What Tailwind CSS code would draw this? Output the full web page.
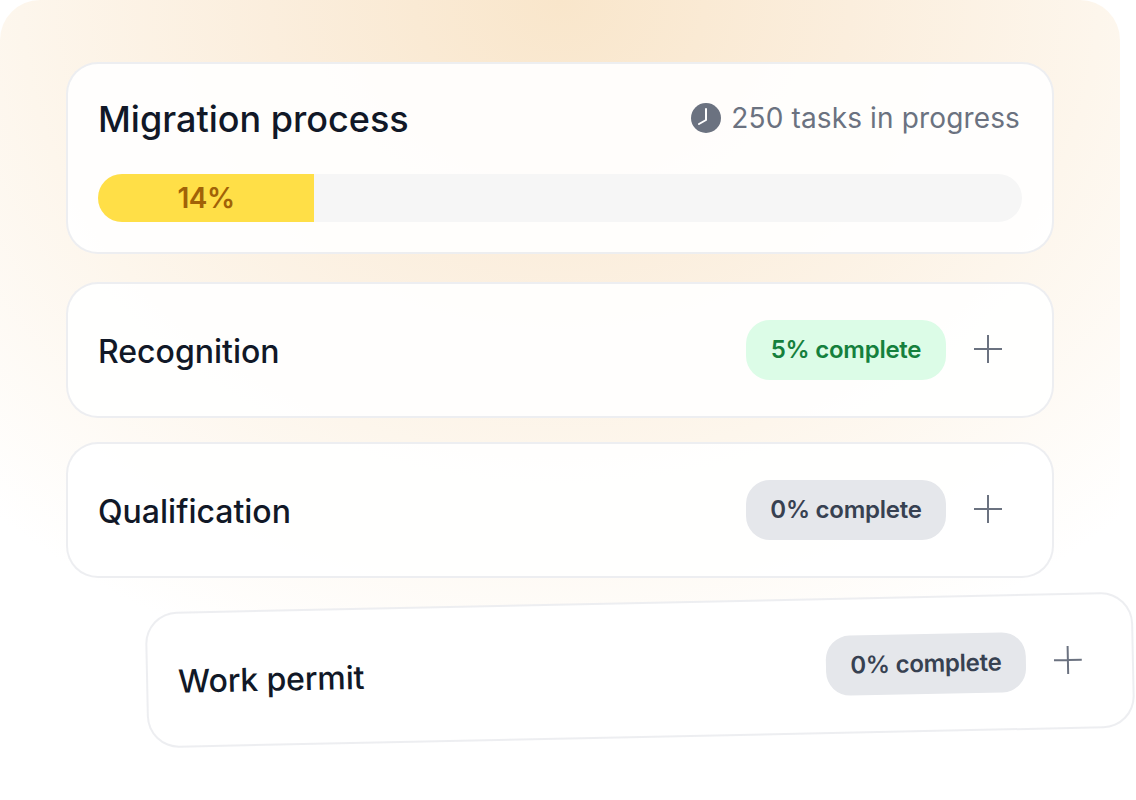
<!DOCTYPE html>
<html lang="en">
<head>
    <meta charset="UTF-8">
    <title>Migration process</title>
    <script src="https://cdn.jsdelivr.net/npm/@tailwindcss/browser@4"></script>
</head>
<body class="bg-white font-['Inter',sans-serif] overflow-hidden">
    <div class="w-[1120px] h-[800px] rounded-t-[40px] pt-[62px] pl-[66px] bg-[radial-gradient(ellipse_74%_88%_at_50%_0%,#f9e6cb_0%,#fbeedd_35%,#fdf6ec_65%,#ffffff_100%)]">
        <div class="w-[988px] h-[192px] mb-[28px] px-[30px] pt-[30px] rounded-[32px] border-2 border-gray-200/70 bg-white/90">
            <div class="flex items-start justify-between h-[52px]">
                <h1 class="text-[36px] leading-[50px] font-medium text-[#111827]">Migration process</h1>
                <div class="flex items-center gap-[10px] h-[48px] pr-[2px] text-[28px] tracking-[0.14px] text-[#6b7280]">
                    <svg class="w-[30px] h-[30px]" viewBox="0 0 30 30" fill="none">
                        <circle cx="15" cy="15" r="15" fill="#6b7280"/>
                        <path d="M15 6v11l-7 4" stroke="#fff" stroke-width="2" stroke-linecap="round" stroke-linejoin="round"/>
                    </svg>
                    <span>250 tasks in progress</span>
                </div>
            </div>
            <div class="mt-[28px] h-[48px] rounded-full bg-[#f6f6f6] overflow-hidden">
                <div class="w-[216px] h-full bg-[#ffdf47] flex items-center justify-center text-[28px] font-semibold tracking-[-0.5px] text-[#a16207]">14%</div>
            </div>
        </div>

        <div class="w-[988px] h-[136px] mb-[24px] pl-[30px] pr-[50px] flex items-center justify-between rounded-[32px] border-2 border-gray-200/70 bg-white/90">
            <span class="pt-[3px] text-[32px] font-medium text-[#111827]">Recognition</span>
            <div class="flex items-center gap-[28px]">
                <span class="w-[200px] h-[60px] flex items-center justify-center rounded-3xl bg-[#dcfce7] text-[24px] font-semibold tracking-[-0.25px] text-[#15803d]">5% complete</span>
                <svg class="w-[28px] h-[28px] mb-[2px]" viewBox="0 0 28 28" fill="none" stroke="#6b7280" stroke-width="2"><path d="M0 14h28M14 0v28"/></svg>
            </div>
        </div>

        <div class="w-[988px] h-[136px] mb-[24px] pl-[30px] pr-[50px] flex items-center justify-between rounded-[32px] border-2 border-gray-200/70 bg-white/90">
            <span class="pt-[3px] text-[32px] font-medium text-[#111827]">Qualification</span>
            <div class="flex items-center gap-[28px]">
                <span class="w-[200px] h-[60px] flex items-center justify-center rounded-3xl bg-[#e5e7eb] text-[24px] font-semibold tracking-[-0.25px] text-[#374151]">0% complete</span>
                <svg class="w-[28px] h-[28px] mb-[2px]" viewBox="0 0 28 28" fill="none" stroke="#6b7280" stroke-width="2"><path d="M0 14h28M14 0v28"/></svg>
            </div>
        </div>

        <div class="w-[988px] h-[136px] ml-[80px] rotate-[-1.2deg] pl-[30px] pr-[50px] flex items-center justify-between rounded-[32px] border-2 border-gray-200/70 bg-white/90">
            <span class="pt-[3px] text-[32px] font-medium tracking-[-0.15px] text-[#111827]">Work permit</span>
            <div class="flex items-center gap-[28px]">
                <span class="w-[200px] h-[60px] flex items-center justify-center rounded-3xl bg-[#e5e7eb] text-[24px] font-semibold tracking-[-0.25px] text-[#374151]">0% complete</span>
                <svg class="w-[28px] h-[28px] mb-[2px]" viewBox="0 0 28 28" fill="none" stroke="#6b7280" stroke-width="2"><path d="M0 14h28M14 0v28"/></svg>
            </div>
        </div>
    </div>
</body>
</html>
